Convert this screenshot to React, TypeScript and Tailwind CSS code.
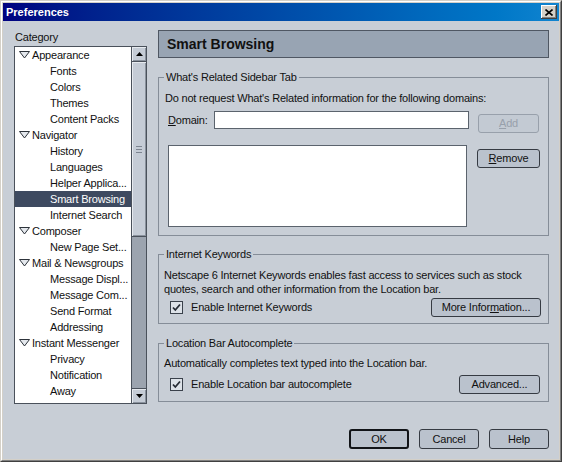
import React from 'react';

type Node = { label: string; parent?: boolean; selected?: boolean };

const tree: Node[] = [
  { label: 'Appearance', parent: true },
  { label: 'Fonts' },
  { label: 'Colors' },
  { label: 'Themes' },
  { label: 'Content Packs' },
  { label: 'Navigator', parent: true },
  { label: 'History' },
  { label: 'Languages' },
  { label: 'Helper Applica...' },
  { label: 'Smart Browsing', selected: true },
  { label: 'Internet Search' },
  { label: 'Composer', parent: true },
  { label: 'New Page Set...' },
  { label: 'Mail & Newsgroups', parent: true },
  { label: 'Message Displ...' },
  { label: 'Message Com...' },
  { label: 'Send Format' },
  { label: 'Addressing' },
  { label: 'Instant Messenger', parent: true },
  { label: 'Privacy' },
  { label: 'Notification' },
  { label: 'Away' },
];

const Twisty = () => (
  <svg width="11" height="8" viewBox="0 0 11 8">
    <path d="M0.5 0.5 H10.5 L5.5 7 Z" fill="#e4e8ed" stroke="#2c323a" />
  </svg>
);

const Check = () => (
  <svg width="13" height="13" viewBox="0 0 13 13">
    <rect x="0.5" y="0.5" width="12" height="12" fill="#dde2e8" stroke="#3a414b" />
    <path d="M3 6.5 L5.3 9 L10 3.5" stroke="#262c35" strokeWidth="1.8" fill="none" />
  </svg>
);

const Btn: React.FC<{
  children: React.ReactNode;
  className?: string;
  def?: boolean;
  disabled?: boolean;
}> = ({ children, className = '', def, disabled }) => (
  <button
    className={`flex items-center justify-center rounded-[3px] leading-none ${
      disabled
        ? 'border border-[#98a0ab] text-[#98a0ab] bg-[#c3cad3]'
        : def
          ? 'border-2 border-[#111418] text-[#111] bg-[#bac2cd]'
          : 'border border-[#363b43] text-[#111] bg-[#bac2cd]'
    } ${className}`}
  >
    {children}
  </button>
);

export default function App() {
  return (
    <div className="w-[562px] h-[462px] font-['Liberation_Sans',Arial,sans-serif] text-[11px] tracking-[-0.2px] text-[#111] border border-t-[#d4d0c8] border-l-[#d4d0c8] border-r-[#404040] border-b-[#404040]">
      <div className="w-full h-full flex flex-col border border-t-white border-l-white border-r-[#808080] border-b-[#808080] p-px bg-[#d4d0c8]">
        {/* title bar */}
        <div className="h-[18px] flex items-center bg-gradient-to-r from-[#000080] to-[#1084d0]">
          <span className="pl-[3px] text-white font-bold text-[11px] tracking-normal flex-1">Preferences</span>
          <div className="w-[16px] h-[14px] mr-[2px] bg-[#d4d0c8] flex items-center justify-center shadow-[inset_-1px_-1px_#404040,inset_1px_1px_#fff,inset_-2px_-2px_#808080]">
            <svg width="8" height="7" viewBox="0 0 8 7">
              <path d="M0.5 0.5 L7.5 6.5 M7.5 0.5 L0.5 6.5" stroke="#000" strokeWidth="1.6" />
            </svg>
          </div>
        </div>

        {/* body */}
        <div className="flex-1 flex flex-col bg-[#c8ced6] pl-[11px] pr-[10px] pt-[9px] pb-[10px]">
          <div className="flex items-start gap-[11px]">
            {/* category column */}
            <div className="w-[133px] flex flex-col">
              <div className="h-[14px] leading-[14px] pl-px">Category</div>
              <div className="mt-[2px] h-[358px] flex border border-[#4a515b] bg-white">
                <div className="flex-1 flex flex-col">
                  {tree.map((n) => (
                    <div
                      key={n.label}
                      className={`h-4 flex items-center whitespace-nowrap ${
                        n.selected ? 'bg-[#3e4a60] text-white' : ''
                      } ${n.parent ? 'pl-[4px]' : 'pl-[35px]'}`}
                    >
                      {n.parent && (
                        <span className="mr-[2px] flex">
                          <Twisty />
                        </span>
                      )}
                      {n.label}
                    </div>
                  ))}
                </div>
                {/* scrollbar */}
                <div className="w-[15px] flex flex-col border-l border-[#4a515b]">
                  <div className="h-[15px] flex items-center justify-center bg-[#c5ccd6] border-b border-[#4a515b] shadow-[inset_1px_1px_#e6eaef,inset_-1px_-1px_#8a929d]">
                    <svg width="7" height="4" viewBox="0 0 7 4">
                      <path d="M3.5 0 L7 4 H0 Z" fill="#000" />
                    </svg>
                  </div>
                  <div className="h-[175px] flex items-center justify-center bg-[#c5ccd6] border-b border-[#4a515b] shadow-[inset_1px_1px_#e6eaef,inset_-1px_-1px_#8a929d]">
                    <div className="flex flex-col gap-[2px]">
                      <div className="w-[6px] h-px bg-[#7d8591]" />
                      <div className="w-[6px] h-px bg-[#7d8591]" />
                      <div className="w-[6px] h-px bg-[#7d8591]" />
                    </div>
                  </div>
                  <div className="flex-1 bg-[#9ca4af]" />
                  <div className="h-[15px] flex items-center justify-center bg-[#c5ccd6] border-t border-[#4a515b] shadow-[inset_1px_1px_#e6eaef,inset_-1px_-1px_#8a929d]">
                    <svg width="7" height="4" viewBox="0 0 7 4">
                      <path d="M0 0 H7 L3.5 4 Z" fill="#000" />
                    </svg>
                  </div>
                </div>
              </div>
            </div>

            {/* right panel */}
            <div className="flex-1 flex flex-col">
              <div className="h-[28px] flex items-center pl-[8px] bg-[#98a4b3] border border-[#4f5763] text-[14px] font-bold tracking-normal text-[#111]">
                Smart Browsing
              </div>

              <fieldset className="mt-[12px] min-w-0 border border-[#858d98] pt-[7px] pb-[8px]">
                <legend className="ml-[5px] px-[2px] leading-[14px]">What's Related Sidebar Tab</legend>
                <div className="pl-[6px] leading-[14px]">
                  Do not request What's Related information for the following domains:
                </div>
                <div className="mt-[6px] flex items-start">
                  <span className="w-[46px] ml-[9px] leading-[18px]">
                    <u>D</u>omain:
                  </span>
                  <div className="w-[255px] h-[18px] bg-white border border-[#5b636d]" />
                  <Btn disabled className="ml-[9px] mt-[3px] w-[61px] h-[19px]">
                    <u>A</u>dd
                  </Btn>
                </div>
                <div className="mt-[12px] flex items-start">
                  <div className="ml-[9px] w-[299px] h-[82px] bg-white border border-[#5b636d]" />
                  <Btn className="ml-[10px] mt-[4px] w-[63px] h-[19px]">
                    <u>R</u>emove
                  </Btn>
                </div>
              </fieldset>

              <fieldset className="mt-[11px] min-w-0 border border-[#858d98] pt-[7px] pb-[6px]">
                <legend className="ml-[5px] px-[2px] leading-[14px]">Internet Keywords</legend>
                <div className="pl-[5px] leading-[14px]">
                  Netscape 6 Internet Keywords enables fast access to services such as stock
                  <br />
                  quotes, search and other information from the Location bar.
                </div>
                <div className="mt-[2px] h-[19px] flex items-center">
                  <span className="ml-[11px] flex">
                    <Check />
                  </span>
                  <span className="ml-[8px] flex-1">Enable Internet Keywords</span>
                  <Btn className="mr-[7px] w-[110px] h-[19px]">
                    More Infor<u>m</u>ation...
                  </Btn>
                </div>
              </fieldset>

              <fieldset className="mt-[12px] min-w-0 border border-[#858d98] pt-[6px] pb-[7px]">
                <legend className="ml-[5px] px-[2px] leading-[14px]">Location Bar Autocomplete</legend>
                <div className="pl-[5px] leading-[14px]">
                  Automatically completes text typed into the Location bar.
                </div>
                <div className="mt-[5px] h-[19px] flex items-center">
                  <span className="ml-[11px] flex">
                    <Check />
                  </span>
                  <span className="ml-[8px] flex-1">Enable Location bar autocomplete</span>
                  <Btn className="mr-[8px] w-[81px] h-[19px]">Advanced...</Btn>
                </div>
              </fieldset>
            </div>
          </div>

          <div className="mt-auto flex justify-end gap-[10px]">
            <Btn def className="w-[60px] h-[20px]">OK</Btn>
            <Btn className="w-[60px] h-[20px]">Cancel</Btn>
            <Btn className="w-[60px] h-[20px]">Help</Btn>
          </div>
        </div>
      </div>
    </div>
  );
}
